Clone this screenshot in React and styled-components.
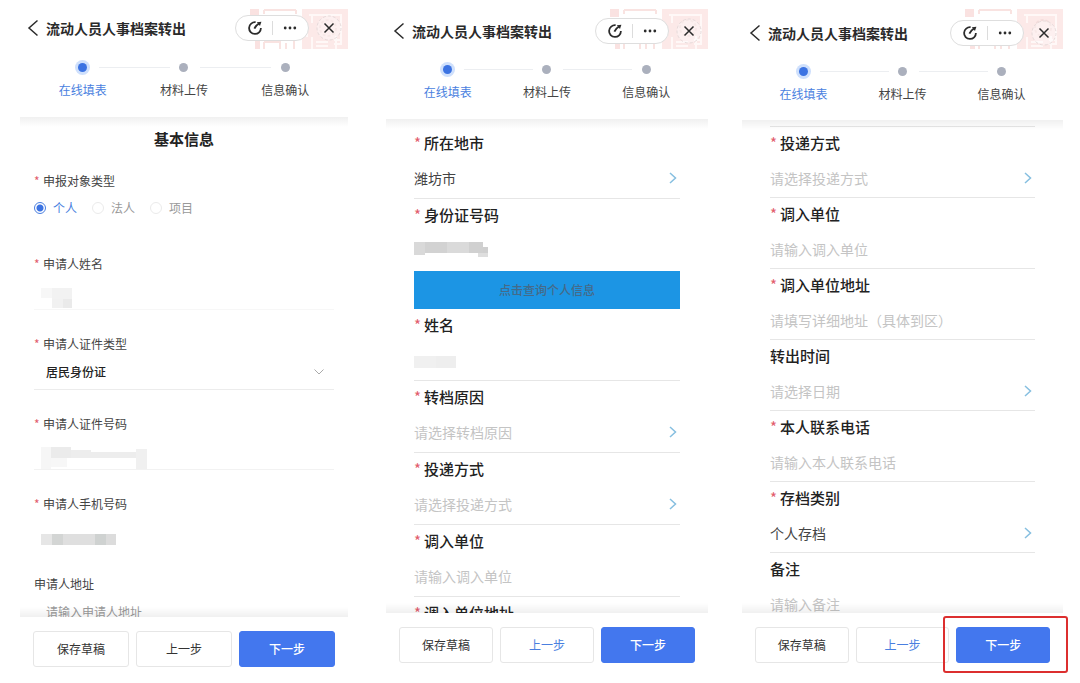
import React from 'react';
import styled, { createGlobalStyle } from 'styled-components';

const GlobalStyle = createGlobalStyle`
  * {
    box-sizing: border-box;
  }

  body {
    margin: 0;
    background: #fff;
    color: #333;
    font-family: 'Noto Sans CJK SC', 'Noto Sans', sans-serif;
    font-size: 12px;
    line-height: 20px;
  }

  button, input, select {
    font-family: inherit;
    line-height: inherit;
    margin: 0;
  }
`;

const Page = styled.main`
  display: flex;
  height: 100vh;
  padding: 9px 17px 0 0;
  overflow: hidden;
`;

const Screen = styled.section`
  flex: ${(p) => p.$grow} 1 0;
  min-width: 0;
  margin-left: ${(p) => p.$gutter}px;
  padding-bottom: ${(p) => p.$bottom}px;
  display: flex;
  flex-direction: column;
`;

const Header = styled.header`
  position: relative;
  height: ${(p) => p.$height}px;
  flex-shrink: 0;
  display: flex;
  align-items: center;
  padding: 0 6px 0 7px;
`;

const SealArt = styled.svg`
  position: absolute;
  top: 0;
  right: 0;
  width: 98px;
  height: 40px;
`;

const IconButton = styled.button`
  position: relative;
  display: flex;
  align-items: center;
  justify-content: center;
  width: ${(p) => p.$width}px;
  height: 24px;
  padding: 0;
  border: none;
  border-radius: 12px;
  background: none;
  color: #2b2b2b;
  cursor: pointer;
`;

const Title = styled.h1`
  flex: 1;
  margin: 0 0 0 7px;
  font-size: 14px;
  font-weight: 700;
  color: #2a2a2a;
  white-space: nowrap;
`;

const Capsule = styled.div`
  position: relative;
  display: flex;
  align-items: center;
  justify-content: center;
  width: 74px;
  height: 26px;
  margin-right: 7px;
  border: 1px solid #dedede;
  border-radius: 13px;
  background: #fff;
`;

const Divider = styled.span`
  width: 1px;
  height: 14px;
  background: #dcdcdc;
`;

const StepList = styled.ol`
  flex-shrink: 0;
  display: flex;
  height: ${(p) => p.$height}px;
  margin: 0;
  padding: ${(p) => p.$top}px 12px 0;
  list-style: none;
`;

const StepItem = styled.li`
  position: relative;
  flex: 1;
  display: flex;
  flex-direction: column;
  align-items: center;
  gap: 8px;
  color: ${(p) => (p.$active ? '#4a7fe0' : '#444')};

  &:not(:first-child)::before {
    content: '';
    position: absolute;
    top: 4px;
    left: calc(-50% + 16px);
    right: calc(50% + 14px);
    height: 1px;
    background: #eceef1;
  }
`;

const StepDot = styled.span`
  width: 9px;
  height: 9px;
  border-radius: 50%;
  background: ${(p) => (p.$active ? '#3c73e2' : '#abb0bd')};
  box-shadow: ${(p) => (p.$active ? '0 0 0 3px #cfe0fc' : 'none')};
`;

const Body = styled.div`
  position: relative;
  flex: 1;
  min-height: 0;
  overflow: hidden;
  padding: ${(p) => p.$padding};

  &::before,
  &::after {
    content: '';
    position: absolute;
    left: 0;
    right: 0;
    height: 10px;
    pointer-events: none;
  }

  &::before {
    top: 0;
    background: linear-gradient(rgba(0, 0, 0, 0.06), rgba(0, 0, 0, 0));
  }

  &::after {
    bottom: 0;
    background: linear-gradient(rgba(0, 0, 0, 0), rgba(0, 0, 0, 0.06));
  }
`;

const SectionTitle = styled.h2`
  margin: 0 0 22px;
  font-size: 15px;
  font-weight: 700;
  text-align: center;
  color: #222;
`;

const Star = styled.span`
  display: inline-block;
  width: ${(p) => p.$width}px;
  color: #e25c6c;
  font-weight: 400;
`;

const RadioGroup = styled.fieldset`
  margin: 0 0 30px;
  padding: 0;
  border: none;
`;

const RadioRow = styled.div`
  display: flex;
  align-items: center;
  gap: 15px;
  height: 33px;
`;

const Legend = styled.legend`
  padding: 0;
  color: #444;
`;

const RadioLabel = styled.label`
  display: flex;
  align-items: center;
  gap: 7px;
  color: #999;

  &:has(input:checked) {
    color: #4a7fe0;
  }
`;

const Radio = styled.input`
  appearance: none;
  width: 12px;
  height: 12px;
  border: 1px solid #ebebeb;
  border-radius: 50%;

  &:checked {
    border-color: #4a7fe0;
    background: radial-gradient(circle, #3c73e2 0 3px, #fff 4px);
  }
`;

const Field = styled.div`
  margin-bottom: 24px;
`;

const FieldLabel = styled.label`
  display: block;
  height: 20px;
  color: #444;
`;

const FieldControl = styled.div`
  display: flex;
  align-items: ${(p) => (p.$masked ? 'flex-end' : 'center')};
  height: 36px;
  padding: 0 9px 0 ${(p) => (p.$masked ? 7 : 12)}px;
  border-bottom: 1px solid ${(p) => p.$line || 'transparent'};
`;

const Select = styled.select`
  flex: 1;
  min-width: 0;
  padding: 0;
  border: none;
  background: none;
  appearance: none;
  font-size: 12px;
  font-weight: 500;
  color: #222;
`;

const TextInput = styled.input`
  flex: 1;
  min-width: 0;
  height: 20px;
  padding: 0;
  border: none;
  outline: none;
  background: none;
  font-size: ${(p) => p.$size}px;
  color: #444;

  &::placeholder {
    color: ${(p) => p.$hint};
    opacity: 1;
  }
`;

const Row = styled.div`
  height: ${(p) => p.$height}px;
  border-bottom: 1px solid ${(p) => (p.$line ? '#e6e6e6' : 'transparent')};
`;

const RowLabel = styled.label`
  display: block;
  height: 31px;
  line-height: 31px;
  font-size: 15px;
  font-weight: 500;
  color: #222;
`;

const RowControl = styled.div`
  display: flex;
  align-items: center;
  height: 39px;
  padding-right: 3px;
`;

const RowPicker = styled.button`
  flex: 1;
  display: flex;
  align-items: center;
  justify-content: space-between;
  padding: 0;
  border: none;
  background: none;
  font-size: 14px;
  color: ${(p) => (p.$filled ? '#444' : '#c4c4c4')};
  cursor: pointer;
`;

const Rows = styled.div`
  border-top: 1px solid #e6e6e6;
`;

const QueryButton = styled.button`
  display: block;
  width: 100%;
  height: 38px;
  padding: 0;
  border: none;
  background: #1c95e4;
  color: #456a88;
  font-size: 12px;
  font-weight: 500;
  cursor: pointer;
`;

const Footer = styled.footer`
  flex-shrink: 0;
  display: flex;
  gap: 7px;
  padding: 14px 13px 0;
`;

const ActionButton = styled.button`
  width: 100%;
  height: 36px;
  padding: 0;
  border: 1px solid ${(p) => (p.$primary ? '#4377ee' : '#e6e6e6')};
  border-radius: 3px;
  background: ${(p) => (p.$primary ? '#4377ee' : '#fff')};
  color: ${(p) => (p.$primary ? '#fff' : p.$link ? '#4a7fe0' : '#333')};
  font-size: 12px;
  font-weight: ${(p) => (p.$primary ? 500 : 400)};
  cursor: pointer;
`;

const ActionSlot = styled.div`
  position: relative;
  flex: 1;
`;

const Highlight = styled.span`
  position: absolute;
  inset: -11px -18px -10px -13px;
  border: 2px solid #dc2f2f;
  border-radius: 3px;
  pointer-events: none;
`;

const BackIcon = () => (
  <svg width="12" height="18" viewBox="0 0 12 18" fill="none" stroke="currentColor" strokeWidth="1.5">
    <path d="M10.5 1.5L2 9l8.5 7.5" />
  </svg>
);

const RefreshIcon = () => (
  <svg width="16" height="16" viewBox="0 0 16 16" fill="none" stroke="currentColor" strokeWidth="1.8">
    <path d="M8.6 2.2A5.9 5.9 0 1 0 13.9 8" />
    <path d="M7.4 8.6C8 6.800 9.500 5.200 12 3.600" />
    <path d="M9.800 2.200l4.600-.5-1.400 4.300z" fill="currentColor" stroke="none" />
  </svg>
);

const MoreIcon = () => (
  <svg width="16" height="16" viewBox="0 0 16 16" fill="currentColor">
    <circle cx="3.2" cy="8" r="1.4" />
    <circle cx="8" cy="8" r="1.4" />
    <circle cx="12.800" cy="8" r="1.4" />
  </svg>
);

const CloseIcon = () => (
  <svg width="26" height="26" viewBox="0 0 26 26" fill="none" stroke="currentColor" strokeWidth="1.5">
    <circle cx="13" cy="13" r="12" stroke="#e6dada" strokeWidth="1" strokeDasharray="3 2" fill="#fff" fillOpacity="0.35" />
    <path d="M8.5 8.5l9 9M17.5 8.5l-9 9" />
  </svg>
);

const ArrowIcon = () => (
  <svg width="8" height="12" viewBox="0 0 8 12" fill="none" stroke="#86bfe0" strokeWidth="1.5">
    <path d="M1 1l5.5 5L1 11" />
  </svg>
);

const DownIcon = () => (
  <svg width="12" height="8" viewBox="0 0 12 8" fill="none" stroke="#aaa">
    <path d="M1.5 1.5L6 6l4.5-4.5" />
  </svg>
);

const Seal = () => (
  <SealArt viewBox="0 0 98 40" preserveAspectRatio="none" fill="none" stroke="#f9e3e1" strokeWidth="2" aria-hidden="true">
    <path d="M0 0h9v8H0zM5 30h5v10H5z" fill="#fae2e1" stroke="none" />
    <path d="M14 1h32M14 1v4M46 1v4M14 33h16M14 33v7M30 30v10M36 34v6M44 32v8" />
    <path d="M52 0h46v40H52z" fill="#fce9e8" stroke="none" />
    <path d="M59 6h32v28M62 6v8M62 28v12M66 33h12M66 37h12M84 31h8M84 35h8M86 27v13M57 18v10" stroke="#fff8f7" />
    <circle cx="78" cy="19" r="8" stroke="#f3dcdb" strokeDasharray="3 2" />
  </SealArt>
);

// Pixelated blocks that cover private values
const Mosaic = ({ width, height, blocks }) => (
  <svg width={width} height={height} shapeRendering="crispEdges" aria-hidden="true">
    {blocks.map(([x, y, w, h, fill]) => (
      <rect key={`${x}-${y}`} x={x} y={y} width={w} height={h} fill={fill} />
    ))}
  </svg>
);

const applicantName = [
  [0, 0, 11, 10, '#f7f7f7'],
  [11, 0, 20, 11, '#f2f2f2'],
  [11, 11, 11, 9, '#f1f1f1'],
  [22, 11, 9, 9, '#eaeaea'],
];

const applicantId = [
  [0, 0, 10, 22, '#f6f6f6'],
  [10, 0, 20, 11, '#ebebeb'],
  [10, 11, 16, 9, '#f7f7f7'],
  [30, 3, 20, 8, '#ededed'],
  [50, 5, 45, 6, '#ededed'],
  [95, 2, 11, 20, '#f0f0f0'],
];

const applicantPhone = [
  [0, 0, 11, 11, '#e6e6e6'],
  [11, 0, 11, 11, '#d3d5d4'],
  [22, 0, 32, 11, '#dfdfdf'],
  [54, 0, 11, 11, '#cfd2d1'],
  [65, 0, 10, 11, '#dcdcdc'],
];

const idNumber = [
  [0, 0, 11, 13, '#d9d9d9'],
  [11, 0, 22, 11, '#d2d2d2'],
  [33, 0, 22, 11, '#dadada'],
  [55, 0, 14, 11, '#d0d0d0'],
  [64, 11, 10, 4, '#dedede'],
  [69, 5, 5, 6, '#cfcfcf'],
];

const personName = [
  [0, 4, 22, 12, '#f0f0f0'],
  [22, 4, 20, 12, '#eeeeee'],
];

const steps = ['在线填表', '材料上传', '信息确认'];

const transferRows = [
  { label: '转档原因', hint: '请选择转档原因', picker: true, required: true },
  { label: '投递方式', hint: '请选择投递方式', picker: true, required: true },
  { label: '调入单位', hint: '请输入调入单位', required: true },
  { label: '调入单位地址', hint: '请填写详细地址（具体到区）', required: true },
];

const deliveryRows = [
  { label: '投递方式', hint: '请选择投递方式', picker: true, required: true },
  { label: '调入单位', hint: '请输入调入单位', required: true },
  { label: '调入单位地址', hint: '请填写详细地址（具体到区）', required: true },
  { label: '转出时间', hint: '请选择日期', picker: true },
  { label: '本人联系电话', hint: '请输入本人联系电话', required: true },
  { label: '存档类别', value: '个人存档', picker: true, required: true },
  { label: '备注', hint: '请输入备注' },
];

const ScreenHeader = ({ height }) => (
  <Header $height={height}>
    <Seal />
    <IconButton $width={12} aria-label="返回"><BackIcon /></IconButton>
    <Title>流动人员人事档案转出</Title>
    <Capsule>
      <IconButton $width={34} aria-label="刷新"><RefreshIcon /></IconButton>
      <Divider />
      <IconButton $width={34} aria-label="更多"><MoreIcon /></IconButton>
    </Capsule>
    <IconButton $width={26} aria-label="关闭"><CloseIcon /></IconButton>
  </Header>
);

const Steps = ({ height, top }) => (
  <StepList $height={height} $top={top}>
    {steps.map((name, i) => (
      <StepItem key={name} $active={i === 0}>
        <StepDot $active={i === 0} />
        {name}
      </StepItem>
    ))}
  </StepList>
);

const FormRow = ({ id, label, hint, value, picker, required, height = 72, line = true, children }) => (
  <Row $height={height} $line={line}>
    <RowLabel as={children ? 'div' : 'label'} htmlFor={children ? undefined : id}>
      {required && <Star $width={10}>*</Star>}
      {label}
    </RowLabel>
    <RowControl>
      {children}
      {!children && picker && (
        <RowPicker id={id} type="button" $filled={Boolean(value)}>
          {value || hint}
          <ArrowIcon />
        </RowPicker>
      )}
      {!children && !picker && <TextInput id={id} $size={14} $hint="#c4c4c4" placeholder={hint} />}
    </RowControl>
  </Row>
);

const Actions = ({ link, highlight }) => (
  <Footer>
    <ActionSlot><ActionButton>保存草稿</ActionButton></ActionSlot>
    <ActionSlot><ActionButton $link={link}>上一步</ActionButton></ActionSlot>
    <ActionSlot>
      <ActionButton $primary>下一步</ActionButton>
      {highlight && <Highlight />}
    </ActionSlot>
  </Footer>
);

const BasicInfo = () => (
  <Body $padding="12px 14px 0">
    <SectionTitle>基本信息</SectionTitle>
    <RadioGroup>
      <Legend><Star $width={9}>*</Star>申报对象类型</Legend>
      <RadioRow>
        {['个人', '法人', '项目'].map((name, i) => (
          <RadioLabel key={name}>
            <Radio type="radio" name="target" defaultChecked={i === 0} />
            {name}
          </RadioLabel>
        ))}
      </RadioRow>
    </RadioGroup>
    <Field>
      <FieldLabel as="div"><Star $width={9}>*</Star>申请人姓名</FieldLabel>
      <FieldControl $masked $line="#f7f7f7">
        <Mosaic width={31} height={21} blocks={applicantName} />
      </FieldControl>
    </Field>
    <Field>
      <FieldLabel htmlFor="cert-type"><Star $width={9}>*</Star>申请人证件类型</FieldLabel>
      <FieldControl $line="#ececec">
        <Select id="cert-type">
          <option>居民身份证</option>
        </Select>
        <DownIcon />
      </FieldControl>
    </Field>
    <Field>
      <FieldLabel as="div"><Star $width={9}>*</Star>申请人证件号码</FieldLabel>
      <FieldControl $masked $line="#f2f2f2">
        <Mosaic width={106} height={22} blocks={applicantId} />
      </FieldControl>
    </Field>
    <Field>
      <FieldLabel as="div"><Star $width={9}>*</Star>申请人手机号码</FieldLabel>
      <FieldControl $masked>
        <Mosaic width={75} height={15} blocks={applicantPhone} />
      </FieldControl>
    </Field>
    <Field>
      <FieldLabel htmlFor="address">申请人地址</FieldLabel>
      <FieldControl>
        <TextInput id="address" $size={12} $hint="#999" placeholder="请输入申请人地址" />
      </FieldControl>
    </Field>
  </Body>
);

const TransferInfo = () => (
  <Body $padding="8px 28px 0">
    <FormRow id="city" label="所在地市" value="潍坊市" picker required />
    <FormRow label="身份证号码" required line={false}>
      <Mosaic width={74} height={15} blocks={idNumber} />
    </FormRow>
    <QueryButton>点击查询个人信息</QueryButton>
    <FormRow label="姓名" required>
      <Mosaic width={42} height={16} blocks={personName} />
    </FormRow>
    {transferRows.map((row) => (
      <FormRow key={row.label} id={`transfer-${row.label}`} {...row} />
    ))}
  </Body>
);

const DeliveryInfo = () => (
  <Body $padding="6px 28px 0">
    <Rows>
      {deliveryRows.map((row) => (
        <FormRow key={row.label} id={`delivery-${row.label}`} height={71} {...row} />
      ))}
    </Rows>
  </Body>
);

const App = () => (
  <>
    <GlobalStyle />
    <Page>
      <Screen $grow={328} $gutter={20} $bottom={16}>
        <ScreenHeader height={38} />
        <Steps height={70} top={16} />
        <BasicInfo />
        <Actions />
      </Screen>
      <Screen $grow={322} $gutter={38} $bottom={20}>
        <ScreenHeader height={43} />
        <Steps height={67} top={13} />
        <TransferInfo />
        <Actions link />
      </Screen>
      <Screen $grow={321} $gutter={34} $bottom={20}>
        <ScreenHeader height={48} />
        <Steps height={63} top={10} />
        <DeliveryInfo />
        <Actions link highlight />
      </Screen>
    </Page>
  </>
);

export default App;
